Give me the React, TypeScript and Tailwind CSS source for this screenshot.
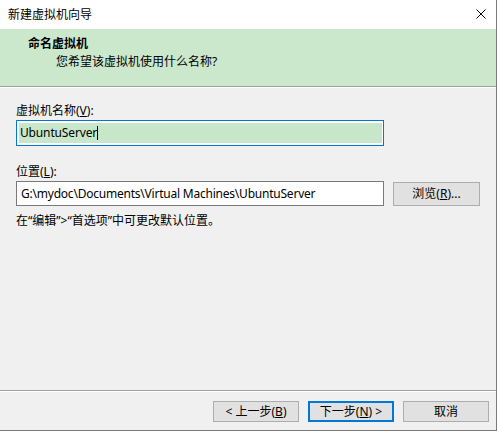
import React from 'react';

const font = { fontFamily: '"Noto Sans", "Noto Sans CJK SC", sans-serif' };

const Btn = ({ children, primary }: { children: React.ReactNode; primary?: boolean }) => (
    <button
        className={`w-[86px] h-[21px] bg-[#e1e1e1] flex items-center justify-center text-[12px] leading-none text-black ${
            primary ? 'border-2 border-[#0078d7]' : 'border border-[#adadad]'
        }`}
    >
        {children}
    </button>
);

const App = () => {
    return (
        <div
            className="w-[497px] h-[431px] flex flex-col bg-[#f0f0f0] border-r border-b border-[#7a7a7a] text-[12px] text-black overflow-hidden"
            style={font}
        >
            {/* Title bar */}
            <div className="h-[29px] shrink-0 bg-white flex items-center justify-between pl-2 pr-[10px]">
                <span className="leading-4">新建虚拟机向导</span>
                <svg width="10" height="10" viewBox="0 0 10 10" className="mt-[-2px]">
                    <path d="M0.5 0.5 L9.5 9.5 M9.5 0.5 L0.5 9.5" stroke="#000" strokeWidth="1" />
                </svg>
            </div>

            {/* Header */}
            <div className="h-[58px] shrink-0 bg-[#cbe8cc] border-b border-[#a0a0a0] flex flex-col pl-[28px] pt-[7px]">
                <div className="font-bold leading-4">命名虚拟机</div>
                <div className="leading-4 pl-[28px] mt-[2px]">您希望该虚拟机使用什么名称?</div>
            </div>
            <div className="h-px shrink-0 bg-white" />

            {/* Body */}
            <div className="flex-1 flex flex-col px-4 pt-[15px]">
                <div className="leading-4">
                    虚拟机名称(<span className="underline">V</span>):
                </div>
                <div className="mt-px w-[368px] h-[26px] bg-white border border-[#0078d7] p-[2px] pr-px">
                    <div className="h-full bg-[#c8e6c9] flex items-center pl-px">
                        <span className="leading-4 tracking-[-0.15px]">UbuntuServer</span>
                        <span className="w-px h-[14px] bg-black" />
                    </div>
                </div>

                <div className="leading-4 mt-[18px]">
                    位置(<span className="underline">L</span>):
                </div>
                <div className="mt-px flex items-start">
                    <div className="w-[368px] h-[25px] bg-white border border-[#7a7a7a] flex items-center pl-1">
                        <span className="leading-4 tracking-[-0.22px]">G:\mydoc\Documents\Virtual Machines\UbuntuServer</span>
                    </div>
                    <button className="ml-[9px] mt-px w-[87px] h-[24px] bg-[#e1e1e1] border border-[#adadad] flex items-center justify-center leading-none">
                        浏览(<span className="underline">R</span>)...
                    </button>
                </div>

                <div className="leading-4 mt-[7px]">在“编辑”&gt;“首选项”中可更改默认位置。</div>
            </div>

            {/* Footer */}
            <div className="shrink-0 border-t border-[#a0a0a0]">
                <div className="h-px bg-white" />
                <div className="flex justify-end gap-[9px] pt-[9px] pb-2 pr-[7px]">
                    <Btn>
                        &lt; 上一步(<span className="underline">B</span>)
                    </Btn>
                    <Btn primary>
                        下一步(<span className="underline">N</span>) &gt;
                    </Btn>
                    <Btn>取消</Btn>
                </div>
            </div>
        </div>
    );
};

export default App;
